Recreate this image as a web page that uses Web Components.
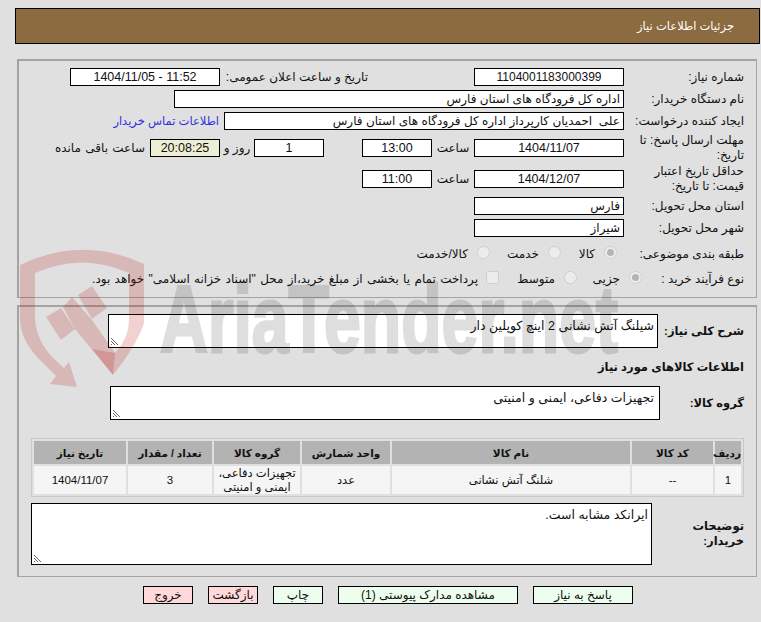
<!DOCTYPE html>
<html lang="fa">
<head>
<meta charset="utf-8">
<title>جزئیات اطلاعات نیاز</title>
<style>
html,body{margin:0;padding:0;background:#e0e0e0}
body{position:relative;width:761px;height:622px;overflow:hidden;color:#111;font:12px "Liberation Sans","DejaVu Sans",sans-serif}
</style>
</head>
<body>
<x-header>جزئیات اطلاعات نیاز</x-header>

<x-panel top="15" bottom="298" pad="5">
  <x-row h="22" label="شماره نیاز:">
    <x-box w="150" center style="font-size:12px">1104001183000399</x-box>
    <x-lbl w="106" center></x-lbl>
    <x-lbl w="148" flush>تاریخ و ساعت اعلان عمومی:</x-lbl>
    <x-box w="150" center>11:52 - 1404/11/05</x-box>
  </x-row>
  <x-row h="22" label="نام دستگاه خریدار:"><x-box w="450">اداره کل فرودگاه های استان فارس</x-box></x-row>
  <x-row h="22" label="ایجاد کننده درخواست:">
    <x-box w="400">علی  احمدیان کارپرداز اداره کل فرودگاه های استان فارس</x-box>
    <x-lbl w="110" link>اطلاعات تماس خریدار</x-lbl>
  </x-row>
  <x-row h="31" label="مهلت ارسال پاسخ: تا تاریخ:">
    <x-box w="150" center>1404/11/07</x-box>
    <x-lbl w="42" center>ساعت</x-lbl>
    <x-box w="70" center>13:00</x-box>
    <x-lbl w="38" center></x-lbl>
    <x-box w="70" center>1</x-box>
    <x-lbl w="34" center>روز و</x-lbl>
    <x-box w="70" center tint>20:08:25</x-box>
    <x-lbl w="94" style="padding-right:5px;word-spacing:1px">ساعت باقی مانده</x-lbl>
  </x-row>
  <x-row h="32" label="حداقل تاریخ اعتبار قیمت: تا تاریخ:">
    <x-box w="150" center>1404/12/07</x-box>
    <x-lbl w="42" center>ساعت</x-lbl>
    <x-box w="70" center>11:00</x-box>
  </x-row>
  <x-row h="22" label="استان محل تحویل:"><x-box w="150">فارس</x-box></x-row>
  <x-row h="22" label="شهر محل تحویل:"><x-box w="150">شیراز</x-box></x-row>
  <x-row h="30" label="طبقه بندی موضوعی:">
    <x-lbl w="7" center></x-lbl>
    <x-radio w="56" checked>کالا</x-radio>
    <x-radio w="71">خدمت</x-radio>
    <x-radio w="90">کالا/خدمت</x-radio>
  </x-row>
  <x-row h="20" lw="94" label="نوع فرآیند خرید :">
    <x-lbl w="2" center></x-lbl>
    <x-radio w="65" checked>جزیی</x-radio>
    <x-radio w="78">متوسط</x-radio>
    <x-radio box w="410" style="word-spacing:1px">پرداخت تمام یا بخشی از مبلغ خرید،از محل "اسناد خزانه اسلامی" خواهد بود.</x-radio>
  </x-row>
</x-panel>

<x-panel top="7" bottom="577" pad="7">
  <x-row h="34" lw="86" gap="0" label="شرح کلی نیاز:" bold><x-memo w="550" h="34">شیلنگ آتش نشانی 2 اینچ کوپلین دار</x-memo></x-row>
  <x-row h="38" lw="300" gap="0" label="اطلاعات کالاهای مورد نیاز" bold></x-row>
  <x-row h="34" lw="84" gap="0" label="گروه کالا:" bold><x-memo w="550" h="34" pr="5">تجهیزات دفاعی، ایمنی و امنیتی</x-memo></x-row>
  <x-goods></x-goods>
  <x-row h="62" lw="70" gap="22" label="توضیحات خریدار:" bold wrap><x-memo w="621" h="62">ایرانکد مشابه است.</x-memo></x-row>
</x-panel>

<x-actions>
  <x-btn w="100" tone="ok">پاسخ به نیاز</x-btn>
  <x-btn w="180" tone="ok">مشاهده مدارک پیوستی (1)</x-btn>
  <x-btn w="50" tone="ok">چاپ</x-btn>
  <x-btn w="50" tone="no">بازگشت</x-btn>
  <x-btn w="50" tone="no">خروج</x-btn>
</x-actions>

<x-watermark></x-watermark>

<script>
// small helper, every element gets its own open shadow root
function def(name, css, html, init) {
  customElements.define(name, class extends HTMLElement {
    constructor() {
      super()
      this.attachShadow({mode: "open"}).innerHTML = "<style>" + css + "</style>" + html
    }
    connectedCallback() { if (init) init(this) }
  })
}
const px = (el, attr, prop) => { if (el.hasAttribute(attr)) el.style.setProperty(prop, el.getAttribute(attr) + "px") }

def("x-header",
  `:host{display:flex;align-items:center;justify-content:flex-start;direction:rtl;box-sizing:border-box;
    margin:8px 1px 0 15px;height:36px;padding:0 25px 0 0;background:#8b6b3f;border:1px solid #000;color:#fff;font-size:11.5px}`,
  `<slot></slot>`)

def("x-panel",
  `:host{display:block;box-sizing:border-box;direction:rtl;width:740px;margin-left:17px;
    border:1px solid #a3a3a3;border-top-width:2px;border-left-width:2px;padding-top:var(--pad,6px);padding-right:12px}`,
  `<slot></slot>`,
  el => {
    el.style.marginTop = el.getAttribute("top") + "px"
    const prev = el.previousElementSibling
    px(el, "pad", "--pad")
    const b = +el.getAttribute("bottom")
    el.style.height = (b - (prev.tagName == "X-HEADER" ? 59 : 305)) + "px"
  })

def("x-row",
  `:host{display:flex;align-items:center;direction:rtl;height:var(--h,22px)}
   .label{flex:none;width:var(--lw,114px);margin-left:var(--gap,6px);line-height:15px;text-align:right}
   :host([bold]) .label{font-weight:bold;font-size:11.5px;white-space:nowrap}
   :host([wrap]) .label{white-space:normal}`,
  `<div class="label"></div><slot></slot>`,
  el => {
    px(el, "h", "--h"); px(el, "lw", "--lw"); px(el, "gap", "--gap")
    el.shadowRoot.querySelector(".label").textContent = el.getAttribute("label") || ""
  })

def("x-box",
  `:host{display:block;flex:none;box-sizing:border-box;width:var(--w);height:18px;line-height:16px;background:#fff;
     border:1px solid #000;padding:0 3px;text-align:right;white-space:pre;overflow:hidden}
   :host([center]){text-align:center;font-size:12.5px}
   :host([tint]){background:#eeeed4}`,
  `<slot></slot>`, el => px(el, "w", "--w"))

def("x-lbl",
  `:host{display:block;flex:none;box-sizing:border-box;width:var(--w);white-space:nowrap;padding-right:4px}
   :host([center]){text-align:center;padding:0}
   :host([flush]){padding:0}
   :host([link]){color:#3030e0;padding-right:5px;font-size:11.5px}`,
  `<slot></slot>`, el => px(el, "w", "--w"))

def("x-radio",
  `:host{display:flex;flex:none;align-items:center;gap:9px;width:var(--w);white-space:nowrap}
   :host([box]){gap:8px}
   i{flex:none;box-sizing:border-box;width:13px;height:13px;border-radius:50%;border:1px solid #cfcfcf;background:#ececec;
     margin-top:-4px;display:flex;align-items:center;justify-content:center}
   :host([checked]) i::after{content:"";width:7px;height:7px;border-radius:50%;background:#b4b4b4}
   :host([box]) i{border-radius:2px}`,
  `<i></i><span><slot></slot></span>`, el => px(el, "w", "--w"))

def("x-memo",
  `:host{display:block;position:relative;flex:none;box-sizing:border-box;width:var(--w);height:var(--hh);background:#fff;
     border:1px solid #000;padding:4px var(--pr,3px) 4px 3px;line-height:15px;text-align:right;font-size:12.5px}
   svg{position:absolute;left:1px;bottom:1px}`,
  `<slot></slot><svg width="9" height="9" viewBox="0 0 9 9"><path d="M1 1l7 7M1 4l4 4M1 7l1 1" stroke="#666" fill="none"/></svg>`,
  el => { px(el, "w", "--w"); px(el, "h", "--hh"); px(el, "pr", "--pr") })

def("x-goods",
  `:host{display:block;box-sizing:border-box;width:713px;margin:18px 0 6px 0;font-size:11.5px}
   table{width:713px;box-sizing:border-box;table-layout:fixed;border-collapse:separate;border-spacing:2px;border:1px solid #c9c9c9;direction:rtl}
   th{height:23px;padding:0;background:#b3b3b3;font-weight:bold;font-size:10.5px}
   td{height:28px;padding:0;background:#f5f5f5;text-align:center;line-height:14px}`,
  `<table>
    <colgroup><col style="width:26px"><col style="width:81px"><col style="width:238px"><col style="width:88px"><col style="width:86px"><col style="width:84px"><col style="width:92px"></colgroup>
    <thead><tr><th>ردیف</th><th>کد کالا</th><th>نام کالا</th><th>واحد شمارش</th><th>گروه کالا</th><th>تعداد / مقدار</th><th>تاریخ نیاز</th></tr></thead>
    <tbody><tr><td>1</td><td>--</td><td>شلنگ آتش نشانی</td><td>عدد</td><td>تجهیزات دفاعی، ایمنی و امنیتی</td><td>3</td><td>1404/11/07</td></tr></tbody>
  </table>`)

def("x-actions",
  `:host{display:flex;direction:rtl;gap:15px;margin:9px 0 0 0;padding-right:128px}`,
  `<slot></slot>`)

def("x-btn",
  `:host{display:block;box-sizing:border-box;width:var(--w);height:18px;line-height:16px;text-align:center;border:1px solid #000;white-space:nowrap}
   :host([tone=ok]){background:#eefeee}
   :host([tone=no]){background:#ffd9d9}`,
  `<slot></slot>`, el => px(el, "w", "--w"))

// lies over the whole page, that is why the letters tint the white boxes too
def("x-watermark",
  `:host{position:absolute;left:0;top:0;width:761px;height:622px;pointer-events:none}
   svg{display:block}
   text{font:bold 95px "Liberation Sans",sans-serif;fill:#000;stroke:#000;stroke-width:3px;opacity:.125}`,
  `<svg width="761" height="622" viewBox="0 0 761 622">
    <text x="160" y="352" textLength="458" lengthAdjust="spacingAndGlyphs">AriaTender.net</text>
    <g fill="#b90000" fill-opacity=".18">
      <path fill-rule="evenodd" d="M20 265Q82 235 144 264V323Q137 345 113 375L92 349 115 353Q129 338 129 320V273Q82 252 35 273V318Q36 340 53 358L64 368 69 362 77 387 50 384 56 376 38 358Q21 340 20 320Z"/>
      <path d="M46 317 61 308 75 329 61 340Z"/>
      <path d="M63 307 72 297 92 320 115 353 113 375 75 329Z"/>
      <path d="M78 295 92 286 107 308 92 319Z"/>
    </g>
  </svg>`)
</script>
</body>
</html>
